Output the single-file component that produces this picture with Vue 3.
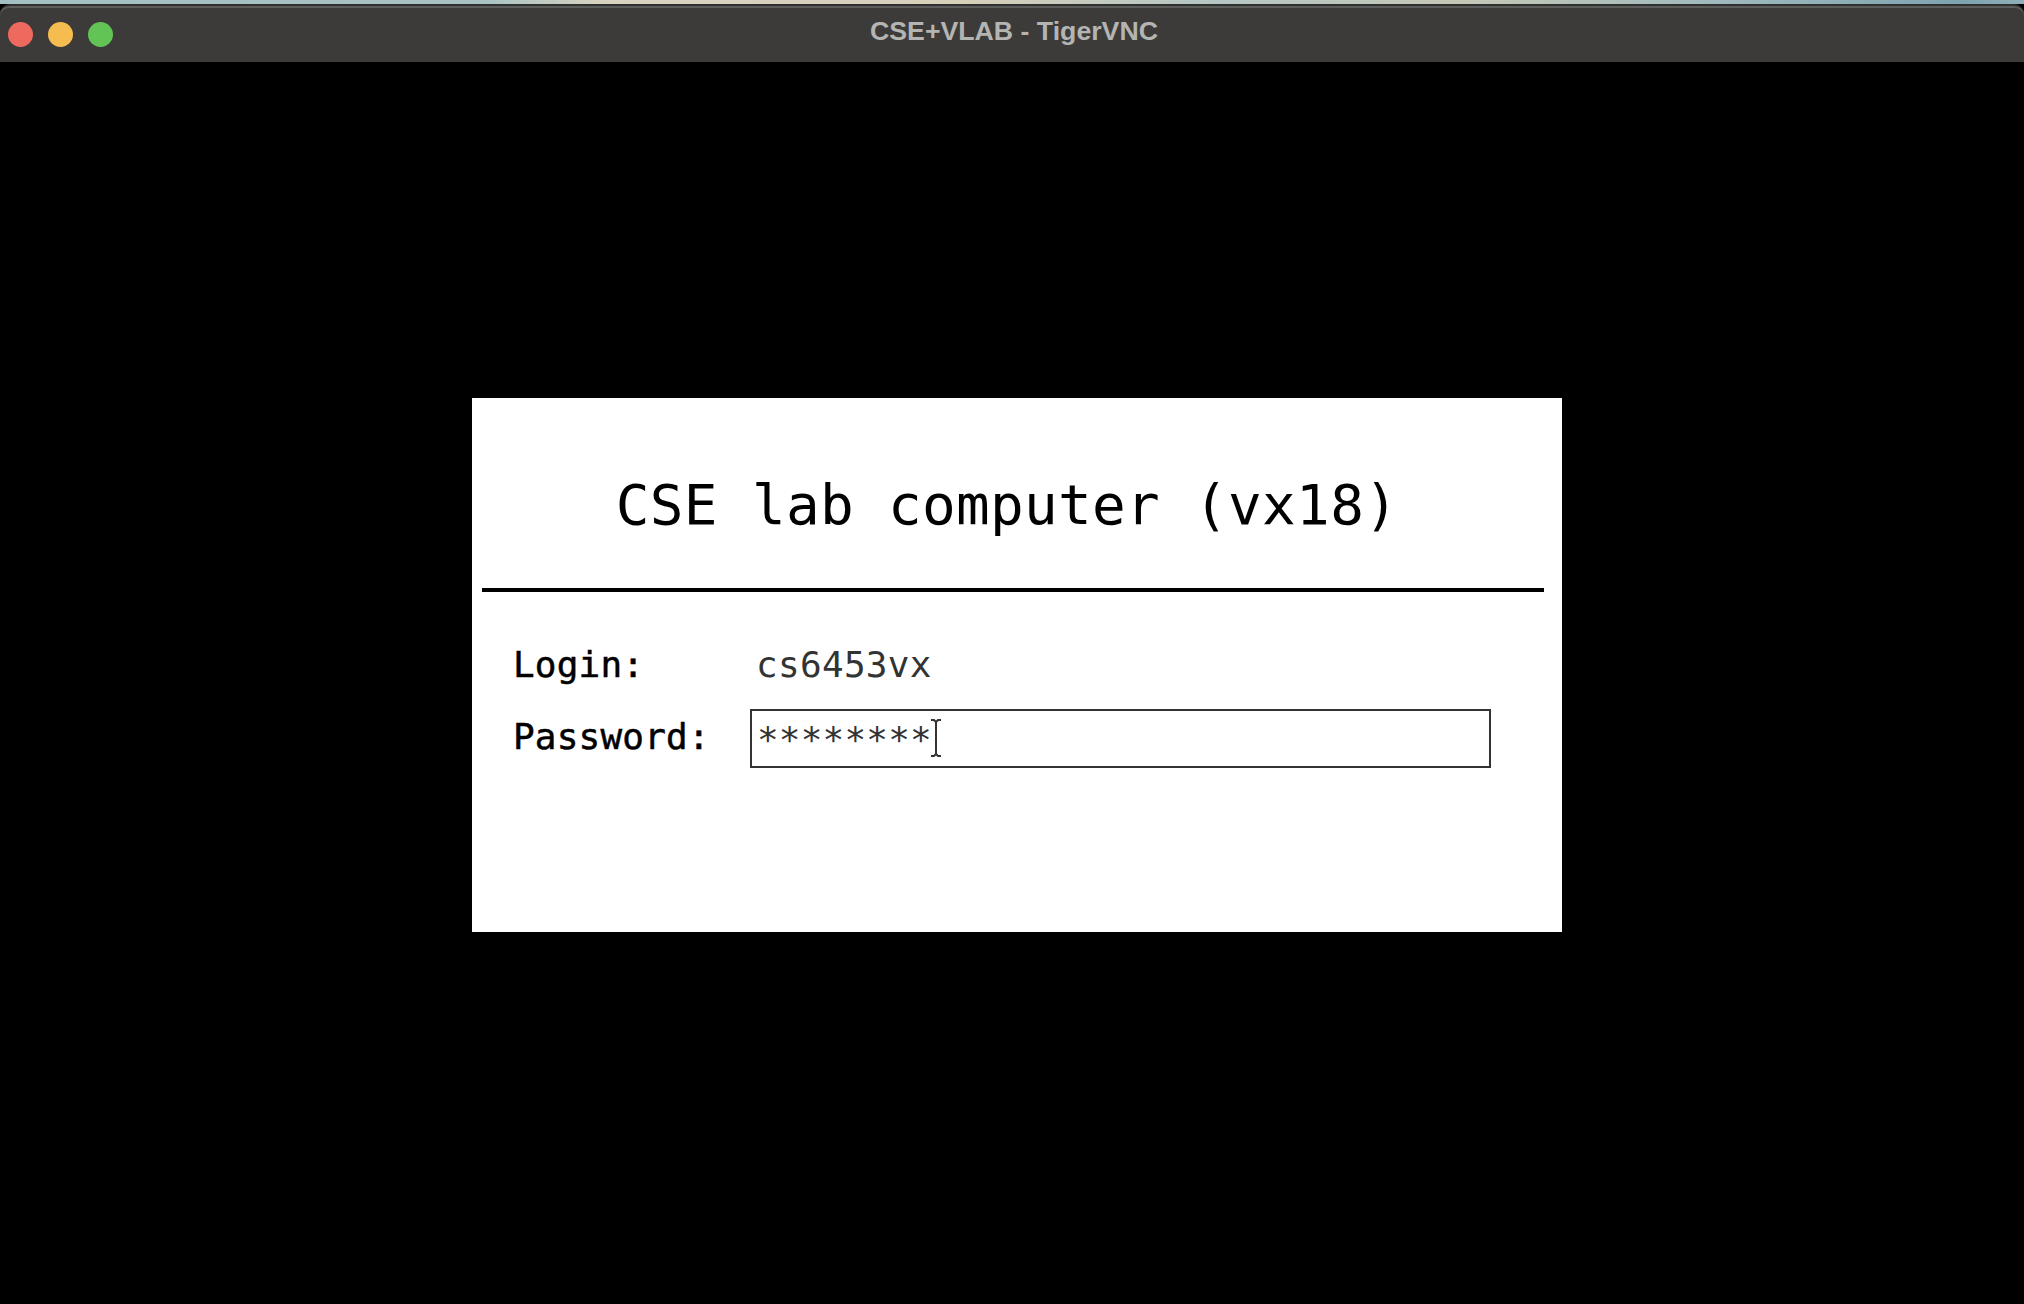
<script setup>
const host = 'vx18'
const login = 'cs6453vx'
const password = '********'
</script>

<template>
  <div class="window">
    <div class="titlebar">
      <div class="lights">
        <span class="light red"></span>
        <span class="light yellow"></span>
        <span class="light green"></span>
      </div>
      <span class="title">CSE+VLAB - TigerVNC</span>
    </div>
    <div class="screen">
      <div class="greeter">
        <h1 class="greeting">CSE lab computer ({{ host }})</h1>
        <div class="rule"></div>
        <div class="form">
          <span class="label">Login:</span>
          <span class="value">{{ login }}</span>
          <span class="label">Password:</span>
          <div class="field">
            <span class="stars">{{ password }}</span>
            <svg class="ibeam" width="12" height="38" viewBox="0 0 12 38">
              <path d="M1 1h3l2 2 2-2h3M6 3v32M1 37h3l2-2 2 2h3" fill="none" stroke="#333" stroke-width="2" />
            </svg>
          </div>
        </div>
      </div>
    </div>
  </div>
</template>

<style>
html, body {
  margin: 0;
  background: #000;
}
</style>

<style scoped>
.window {
  height: 1304px;
  overflow: hidden;
  display: flex;
  flex-direction: column;
  padding-top: 4px;
  box-sizing: border-box;
  background: linear-gradient(90deg, #a3bfc2 0%, #a9c3c4 24%, #d9d3bf 30%, #d6cfba 48%, #b4c6c4 60%, #c6c8b6 72%, #9fb9bd 85%, #7ea3af 97%, #8fb0b8 100%) top / 100% 4px no-repeat #000;
}

.titlebar {
  position: relative;
  height: 58px;
  flex-shrink: 0;
  display: flex;
  align-items: center;
  justify-content: center;
  background: #3c3b39;
  border-top: 2px solid #2f3130;
  box-shadow: inset 0 2px 0 #5c5c5b;
  border-radius: 10px 10px 0 0;
  box-sizing: border-box;
}

.lights {
  position: absolute;
  left: 8px;
  top: 16px;
  display: flex;
  gap: 15px;
}

.light {
  width: 25px;
  height: 25px;
  border-radius: 50%;
}

.red { background: #ee6a5f; }
.yellow { background: #f5bd4f; }
.green { background: #61c454; }

.title {
  font-family: "Liberation Sans", Arial, sans-serif;
  font-size: 26.7px;
  font-weight: 700;
  color: #b4b4b2;
  margin-top: -6px;
  margin-left: 4px;
}

.screen {
  flex: 1;
  padding: 336px 0 0 472px;
  background: #000;
}

.greeter {
  width: 1090px;
  height: 534px;
  box-sizing: border-box;
  padding: 0 18px 0 10px;
  background: #fff;
  color: #000;
  font-family: "DejaVu Sans Mono", "Liberation Mono", monospace;
}

.greeting {
  margin: 0;
  height: 190px;
  box-sizing: border-box;
  padding: 74px 12px 0 0;
  text-align: center;
  font-size: 56px;
  line-height: 66px;
  font-weight: 400;
  letter-spacing: 0.3px;
}

.rule {
  height: 4px;
  background: #000;
}

.form {
  display: grid;
  grid-template-columns: 237px 741px;
  grid-auto-rows: 72px;
  padding: 38px 0 0 31px;
  align-items: center;
  font-size: 36px;
  line-height: 42px;
}

.label {
  padding-bottom: 3px;
  letter-spacing: 0.2px;
  -webkit-text-stroke: 0.5px #000;
}

.value {
  padding: 0 0 3px 6px;
  color: #333;
  letter-spacing: 0.3px;
}

.field {
  height: 59px;
  box-sizing: border-box;
  border: 2px solid #333;
  display: flex;
  align-items: center;
  padding-left: 5px;
  color: #333;
}

.stars {
  margin-top: 3px;
  letter-spacing: 0.2px;
}

.ibeam {
  margin-left: -2px;
}
</style>
